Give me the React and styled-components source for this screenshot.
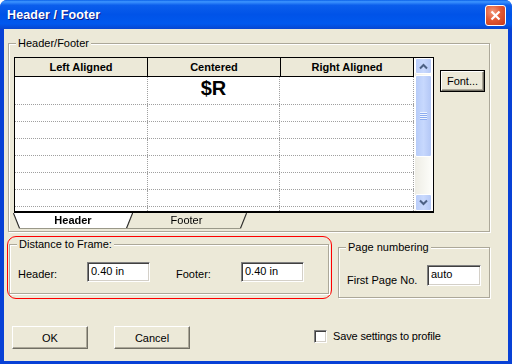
import React from "react";
import styled, { createGlobalStyle } from "styled-components";

const GlobalStyle = createGlobalStyle`
  html, body {
    margin: 0;
    padding: 0;
    background: #ffffff;
  }
  body {
    font-family: "Liberation Sans", Arial, sans-serif;
    font-size: 11px;
    color: #000;
  }
`;

const Window = styled.div`
  width: 512px;
  height: 364px;
  display: flex;
  flex-direction: column;
  background: #0841d6;
  border-radius: 7px 7px 0 0;
  overflow: hidden;
`;

const TitleBar = styled.div`
  height: 29px;
  flex: none;
  display: flex;
  align-items: center;
  padding: 0 6px 0 7px;
  background: linear-gradient(
    #0a60e8 0%,
    #3d95ff 6%,
    #0b5eec 18%,
    #0053e8 50%,
    #0058ee 82%,
    #0746d0 100%
  );
`;

const Title = styled.div`
  flex: 1;
  color: #fff;
  font-weight: bold;
  font-size: 12.5px;
  letter-spacing: 0.1px;
  text-shadow: 1px 1px 0 #0a1b8c;
  padding-top: 1px;
`;

const CloseButton = styled.div`
  width: 19px;
  height: 19px;
  margin-top: 1px;
  border: 1px solid #fff;
  border-radius: 3px;
  background: radial-gradient(circle at 35% 30%, #f29a7c 0%, #e25a35 45%, #c5381a 100%);
  display: flex;
  align-items: center;
  justify-content: center;
`;

const Body = styled.div`
  flex: 1;
  margin: 0 4px 3px 4px;
  background: #ece9d8;
  display: flex;
  flex-direction: column;
`;

const Group = styled.div`
  position: relative;
  border: 1px solid #aca899;
  box-shadow: 1px 1px 0 #fff, inset 1px 1px 0 #fff;
  box-sizing: border-box;
`;

const GroupLabel = styled.span`
  position: absolute;
  top: -7px;
  left: 7px;
  padding: 0 2px;
  line-height: 13px;
  background: #ece9d8;
`;

const MainGroup = styled(Group)`
  margin: 14px 0 0 4px;
  width: 482px;
  padding: 13px 4px 2px 5px;
  display: flex;
  align-items: flex-start;
`;

const GridColumn = styled.div`
  display: flex;
  flex-direction: column;
`;

const GridControl = styled.div`
  width: 420px;
  height: 156px;
  box-sizing: border-box;
  border: 1px solid #000;
  border-bottom-width: 2px;
  background: #fff;
  display: flex;
`;

const Table = styled.div`
  width: 399px;
  display: flex;
  flex-direction: column;
  overflow: hidden;
`;

const HeadRow = styled.div`
  display: flex;
  height: 19px;
  flex: none;
  background: #ece9d8;
  border-bottom: 1px solid #000;
  box-sizing: border-box;
`;

const HeadCell = styled.div`
  width: 133px;
  box-sizing: border-box;
  border-right: 1px solid #000;
  font-weight: bold;
  text-align: center;
  line-height: 18px;
`;

const Row = styled.div`
  display: flex;
  flex: none;
  height: ${(p) => p.$h}px;
  box-sizing: border-box;
  border-bottom: 1px dotted #a0a0a0;
`;

const Cell = styled.div`
  width: ${(p) => (p.$last ? 134 : 133)}px;
  box-sizing: border-box;
  border-right: 1px dotted #a0a0a0;
  text-align: center;
  font-weight: bold;
  font-size: 20px;
  line-height: 20px;
  padding-top: 1px;
`;

const ScrollBar = styled.div`
  width: 17px;
  margin-left: 1px;
  display: flex;
  flex-direction: column;
  background: linear-gradient(to right, #eeede5, #fdfdfa);
`;

const ScrollButton = styled.div`
  height: ${(p) => p.$h}px;
  flex: none;
  box-sizing: border-box;
  border: 1px solid #fff;
  border-radius: 2px;
  background: linear-gradient(to right, #b9cdfa, #c9d9fd 50%, #b4c8f6);
  display: flex;
  align-items: center;
  justify-content: center;
`;

const Thumb = styled.div`
  height: 82px;
  margin-top: 1px;
  flex: none;
  box-sizing: border-box;
  border: 1px solid #fff;
  border-radius: 2px;
  background: linear-gradient(to right, #b7ccf9, #c7d8fd 50%, #b3c7f6);
  display: flex;
  align-items: center;
  justify-content: center;
`;

const Grip = styled.div`
  width: 7px;
  height: 8px;
  background: repeating-linear-gradient(#eef4ff 0 1px, #8cacf0 1px 2px);
`;

const Track = styled.div`
  flex: 1;
`;

const TabStrip = styled.div`
  display: flex;
  height: 16px;
`;

const TabShape = styled.div`
  position: relative;
  z-index: ${(p) => (p.$active ? 2 : 1)};
  margin-left: ${(p) => (p.$active ? 0 : -5)}px;
  filter: drop-shadow(1px 0 0 #222) drop-shadow(-1px 0 0 #222) drop-shadow(0 1px 0 #9a9889);
`;

const TabFace = styled.div`
  width: ${(p) => p.$w}px;
  height: 15px;
  clip-path: ${(p) => p.$clip};
  background: ${(p) => (p.$active ? "#fff" : "#ece9d8")};
  font-weight: ${(p) => (p.$active ? "bold" : "normal")};
  text-align: center;
  line-height: 15px;
`;

const ClassicButton = styled.div`
  box-sizing: border-box;
  width: ${(p) => p.$w}px;
  height: ${(p) => p.$h}px;
  background: #ece9d8;
  border-top: 1px solid #fff;
  border-left: 1px solid #fff;
  border-right: 1px solid #716f64;
  border-bottom: 1px solid #716f64;
  box-shadow: inset -1px -1px 0 #aca899;
  display: flex;
  align-items: center;
  justify-content: center;
`;

const DefaultButton = styled.div`
  margin: 13px 0 0 6px;
  border: 1px solid #000;
  display: flex;
`;

const SecondRow = styled.div`
  display: flex;
  align-items: flex-start;
  margin-top: 4px;
`;

const Highlight = styled.div`
  margin-left: 3px;
  width: 325px;
  height: 63px;
  box-sizing: border-box;
  border: 1px solid #ff0000;
  border-radius: 9px;
  padding: 7px 0 0 1px;
`;

const FieldGroup = styled(Group)`
  width: ${(p) => p.$w}px;
  height: ${(p) => p.$h}px;
  padding: 17px 0 0 8px;
  display: flex;
  align-items: flex-start;
`;

const PageGroup = styled(FieldGroup)`
  margin: 11px 0 0 6px;
`;

const FieldLabel = styled.span`
  width: ${(p) => p.$w}px;
  box-sizing: border-box;
  line-height: 13px;
  padding-top: ${(p) => p.$top}px;
  padding-left: ${(p) => p.$left || 0}px;
`;

const TextInput = styled.div`
  width: ${(p) => p.$w}px;
  height: ${(p) => p.$h}px;
  box-sizing: border-box;
  background: #fff;
  border-top: 1px solid #808080;
  border-left: 1px solid #808080;
  border-right: 1px solid #fff;
  border-bottom: 1px solid #fff;
  box-shadow: inset 1px 1px 0 #404040, inset -1px -1px 0 #d4d0c8;
  padding: 2px 0 0 3px;
  line-height: 13px;
`;

const Footer = styled.div`
  display: flex;
  align-items: center;
  margin-top: 27px;
  padding-left: 8px;
`;

const CancelSlot = styled.div`
  margin-left: 26px;
`;

const CheckRow = styled.label`
  margin-left: 124px;
  display: flex;
  align-items: center;
  gap: 6px;
  margin-top: -3px;
  letter-spacing: -0.15px;
`;

const CheckBox = styled.span`
  width: 13px;
  height: 13px;
  box-sizing: border-box;
  background: #fff;
  border-top: 1px solid #808080;
  border-left: 1px solid #808080;
  border-right: 1px solid #fff;
  border-bottom: 1px solid #fff;
  box-shadow: inset 1px 1px 0 #404040, inset -1px -1px 0 #d4d0c8;
`;

const Chevron = ({ down }) => (
  <svg width="9" height="7" viewBox="0 0 9 7">
    <path
      d={down ? "M1 1.5 L4.5 5 L8 1.5" : "M1 5.5 L4.5 2 L8 5.5"}
      fill="none"
      stroke="#4d6185"
      strokeWidth="2"
    />
  </svg>
);

const rows = [28, 17, 17, 17, 17, 17, 17, 17];

const App = () => (
  <>
    <GlobalStyle />
    <Window>
      <TitleBar>
        <Title>Header / Footer</Title>
        <CloseButton>
          <svg width="11" height="11" viewBox="0 0 11 11">
            <path d="M1.5 1.5 L9.5 9.5 M9.5 1.5 L1.5 9.5" stroke="#fff" strokeWidth="2.2" />
          </svg>
        </CloseButton>
      </TitleBar>
      <Body>
        <MainGroup>
          <GroupLabel>Header/Footer</GroupLabel>
          <GridColumn>
            <GridControl>
              <Table>
                <HeadRow>
                  <HeadCell>Left Aligned</HeadCell>
                  <HeadCell>Centered</HeadCell>
                  <HeadCell>Right Aligned</HeadCell>
                </HeadRow>
                {rows.map((h, i) => (
                  <Row key={i} $h={h}>
                    <Cell />
                    <Cell>{i === 0 ? "$R" : ""}</Cell>
                    <Cell $last />
                  </Row>
                ))}
              </Table>
              <ScrollBar>
                <ScrollButton $h={16}>
                  <Chevron />
                </ScrollButton>
                <Thumb>
                  <Grip />
                </Thumb>
                <Track />
                <ScrollButton $h={17}>
                  <Chevron down />
                </ScrollButton>
              </ScrollBar>
            </GridControl>
            <TabStrip>
              <TabShape $active>
                <TabFace $active $w={118} $clip="polygon(0 0, 118px 0, 112px 15px, 6px 15px)">
                  Header
                </TabFace>
              </TabShape>
              <TabShape>
                <TabFace $w={119} $clip="polygon(6px 0, 119px 0, 113px 15px, 0 15px)">
                  Footer
                </TabFace>
              </TabShape>
            </TabStrip>
          </GridColumn>
          <DefaultButton>
            <ClassicButton $w={43} $h={20}>Font...</ClassicButton>
          </DefaultButton>
        </MainGroup>

        <SecondRow>
          <Highlight>
            <FieldGroup $w={320} $h={50}>
              <GroupLabel>Distance to Frame:</GroupLabel>
              <FieldLabel $w={69} $top={6}>Header:</FieldLabel>
              <TextInput $w={63} $h={20}>0.40 in</TextInput>
              <FieldLabel $w={91} $top={6} $left={26}>Footer:</FieldLabel>
              <TextInput $w={63} $h={20}>0.40 in</TextInput>
            </FieldGroup>
          </Highlight>
          <PageGroup $w={152} $h={51}>
            <GroupLabel>Page numbering</GroupLabel>
            <FieldLabel $w={80} $top={9}>First Page No.</FieldLabel>
            <TextInput $w={54} $h={21}>auto</TextInput>
          </PageGroup>
        </SecondRow>

        <Footer>
          <ClassicButton $w={76} $h={23}>OK</ClassicButton>
          <CancelSlot>
            <ClassicButton $w={76} $h={23}>Cancel</ClassicButton>
          </CancelSlot>
          <CheckRow>
            <CheckBox />
            Save settings to profile
          </CheckRow>
        </Footer>
      </Body>
    </Window>
  </>
);

export default App;
